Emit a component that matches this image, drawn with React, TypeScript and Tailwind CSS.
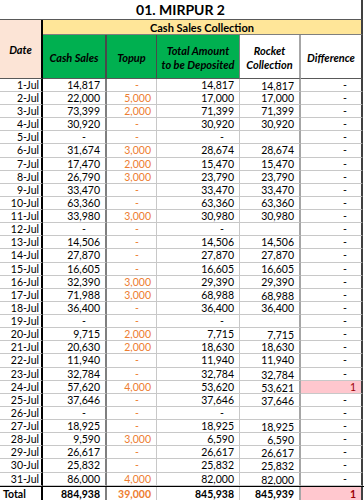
import React from 'react';

type Row = {
  d: string;
  cash: number | null;
  top: number | null;
  total: number | null;
  rocket: number | null | undefined;
  low?: boolean;
  diff?: number;
};

const cash = [14817, 22000, 73399, 30920, null, 31674, 17470, 26790, 33470, 63360, 33980, null, 14506, 27870, 16605, 32390, 71988, 36400, null, 9715, 20630, 11940, 32784, 57620, 37646, null, 18925, 9590, 26617, 25832, 86000];
const topup = [null, 5000, 2000, null, null, 3000, 2000, 3000, null, null, 3000, null, null, null, null, 3000, 3000, null, null, 2000, 2000, null, null, 4000, null, null, null, 3000, null, null, 4000];
const lowRows = [1, 17, 20, 23, 24, 25, 27, 28, 29, 30, 31];
const tallRows = [6, 14, 22, 30];

const rows: Row[] = cash.map((c, i) => {
  const total = c === null ? null : c - (topup[i] ?? 0);
  const day = i + 1;
  return {
    d: `${day}-Jul`,
    cash: c,
    top: topup[i],
    total,
    rocket: total === null ? undefined : day === 24 ? 53621 : total,
    low: lowRows.includes(day),
    diff: day === 24 ? 1 : undefined,
  };
});

const fmt = (n: number) => n.toLocaleString('en-US');

const grid = 'grid grid-cols-[43px_64px_50px_83px_61px_62px]';
const colBorder = [
  'border-r-2 border-r-black',
  'border-r-2 border-r-[#7f7f7f]',
  'border-r border-r-[#c8c8c8]',
  'border-r border-r-[#c8c8c8]',
  'border-r-2 border-r-[#a6a6a6]',
  'border-r-2 border-r-[#404040]',
];

function Num({ v, col, dashPad, orange, low }: { v: number | null | undefined; col: number; dashPad: string; orange?: boolean; low?: boolean }) {
  const color = orange ? 'text-[#ed7d31]' : '';
  return (
    <div className={`flex items-center justify-end overflow-hidden border-b border-b-[#c8c8c8] ${colBorder[col]} ${color} ${low ? 'pt-[2px]' : ''}`}>
      {v === undefined ? null : v === null ? <span className={dashPad}>-</span> : <span className="pr-[5px]">{fmt(v)}</span>}
    </div>
  );
}

export default function App() {
  return (
    <div className="w-[364px] h-[500px] overflow-hidden bg-white text-black font-['Lato',sans-serif] text-[10.5px] leading-[11px]">
      <div className="w-[363px] h-[20px] flex items-center justify-center border-b border-b-[#595959] border-r-2 border-r-[#404040] font-bold text-[14px]">
        01. MIRPUR 2
      </div>

      <div className="grid grid-cols-[43px_320px]">
        <div className="row-span-2 flex items-center justify-center bg-[#fce4d6] border-r-2 border-r-black border-b border-b-[#595959] font-bold italic text-[11px]">
          Date
        </div>
        <div className="h-[15px] flex items-center justify-center bg-[#ffe699] border-b border-b-[#7f7f7f] border-r-2 border-r-[#404040] font-bold text-[11px]">
          Cash Sales Collection
        </div>
        <div className="grid grid-cols-[64px_50px_83px_61px_62px] h-[44px] font-bold italic text-[11px] leading-[14px] text-center">
          <div className="flex items-center justify-center bg-[#00b050] border-b border-b-[#595959] border-r-2 border-r-[#4a4a4a] pt-[2px]">Cash Sales</div>
          <div className="flex items-center justify-center bg-[#00b050] border-b border-b-[#595959] border-r border-r-[#4a4a4a] pt-[2px]">Topup</div>
          <div className="flex items-center justify-center bg-[#00b050] border-b border-b-[#595959] border-r border-r-[#7f7f7f] pt-[2px]">
            Total Amount
            <br />
            to be Deposited
          </div>
          <div className="flex items-center justify-center border-b border-b-[#595959] border-r-2 border-r-[#a6a6a6] pt-[2px]">
            Rocket
            <br />
            Collection
          </div>
          <div className="flex items-center justify-center border-b border-b-[#595959] border-r-2 border-r-[#404040] pt-[2px]">Difference</div>
        </div>
      </div>

      {rows.map((r, i) => (
        <div key={r.d} className={`${grid} ${tallRows.includes(i + 1) ? 'h-[14px]' : 'h-[13px]'}`}>
          <div className={`flex items-center justify-end pr-[2px] border-b border-b-[#c8c8c8] ${colBorder[0]}`}>{r.d}</div>
          <Num v={r.cash} col={1} dashPad="pr-[19px]" />
          <Num v={r.top} col={2} dashPad="pr-[17px]" orange />
          <Num v={r.total} col={3} dashPad="pr-[15px]" />
          <Num v={r.rocket} col={4} dashPad="pr-[15px]" low={r.low} />
          {r.diff ? (
            <div className={`flex items-center justify-end pr-[5px] bg-[#ffc7ce] text-[#9c0006] border-b border-b-[#c8c8c8] ${colBorder[5]}`}>{r.diff}</div>
          ) : (
            <div className={`flex items-center justify-end pr-[14px] border-b border-b-[#c8c8c8] ${colBorder[5]}`}>-</div>
          )}
        </div>
      ))}

      <div className={`${grid} h-[15px] border-t border-t-black font-bold`}>
        <div className={`flex items-center pl-[3px] ${colBorder[0]}`}>Total</div>
        <div className={`flex items-center justify-end pr-[5px] ${colBorder[1]}`}>884,938</div>
        <div className={`flex items-center justify-end pr-[5px] text-[#ed7d31] ${colBorder[2]}`}>39,000</div>
        <div className={`flex items-center justify-end pr-[5px] ${colBorder[3]}`}>845,938</div>
        <div className={`flex items-center justify-end pr-[5px] ${colBorder[4]}`}>845,939</div>
        <div className={`flex items-center justify-end pr-[5px] bg-[#ffc7ce] text-[#9c0006] ${colBorder[5]}`}>1</div>
      </div>
    </div>
  );
}
